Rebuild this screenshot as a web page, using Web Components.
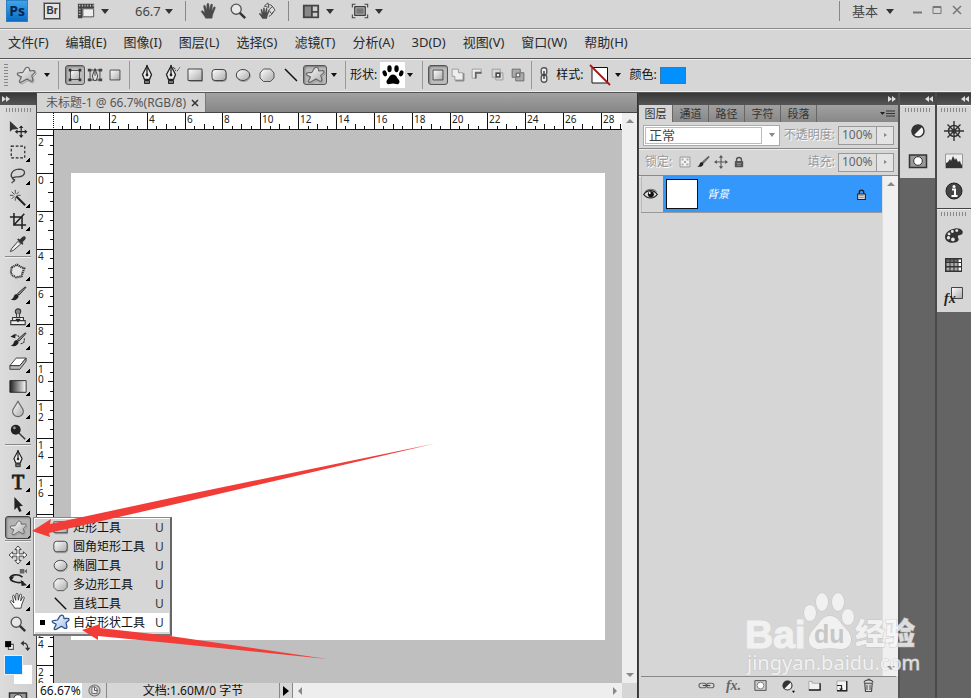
<!DOCTYPE html>
<html lang="zh-CN">
<head>
<meta charset="utf-8">
<title>未标题-1 @ 66.7%(RGB/8)</title>
<style>
html,body{margin:0;height:100%}
body{font-family:"Noto Sans","Noto Sans CJK SC",sans-serif;font-size:12px;line-height:16px;color:#111;background:#d6d6d6;overflow:hidden}
</style>
</head>
<body>
<ps-app></ps-app>
<script>
const RESET = `
*{box-sizing:border-box}
button,select,input{font:inherit;color:inherit;background:none;border:0;border-radius:0;padding:0;margin:0;appearance:none;outline:none}
button{display:flex;align-items:center;justify-content:center;flex:none}
.caret{width:0;height:0;border:3px solid transparent;border-top:4px solid #111;border-bottom:0}
`;
function define(name, css, html, setup) {
  const t = document.createElement('template');
  t.innerHTML = `<style>${RESET}${css}</style>${html}`;
  customElements.define(name, class extends HTMLElement {
    connectedCallback() {
      if (this.shadowRoot) return;
      this.attachShadow({ mode: 'open' }).append(t.content.cloneNode(true));
      if (setup) setup.call(this, this.shadowRoot);
    }
  });
}

/* ---------- icons ---------- */
const STAR = 'M10.500 2.500c2-.8 3 .5 3.200 3.300 1.800.3 4.600-1 5.300.5.700 1.900-2.200 2.700-3.200 4.200.2 2 2 4 .6 5.600-1.800 1-3.700-1.600-5.400-2-2 .4-5 4.100-7.400 3.200-1.500-1.200 1.900-3.700 1.800-5.500-1-1-4-.9-4.200-2.900.4-2 4-.8 5.600-1.500 1.300-1.300 1.700-4 3.700-4.900z';
const PEN = '<path d="M10 0v8" stroke="#222" stroke-width="1.200"/><path d="M10 1 5.500 9.500l2 5h5l2-5z" fill="#eee" stroke="#222" stroke-width="1.300"/><path d="M10 1v8" stroke="#222" stroke-width="1.300"/><circle cx="10" cy="10" r="1.400" fill="#222"/><path d="M7.500 15.500h5v3h-5z" fill="#777" stroke="#222"/>';
const HAND = 'M6.200 18c-.5-2-3.600-5-4.700-7.200-.3-1.300 1.300-1.500 2.200-.5l1.800 1.900L4 5c-.2-1.600 1.600-1.900 2-.5l1.500 4.800L7.700 2.600c.2-1.500 2-1.500 2.200 0l.4 6.500 1.600-6c.5-1.300 2.200-.9 2 .5l-1 6.300 2.300-4c.9-1.100 2.200-.2 1.700 1l-2.600 6.600c-.4 1.700-.6 3-1 4.500z';
const BRUSH = '<path d="M17.800 2.200 9.500 9.500l1.700 1.700 7.300-8c.5-1-.1-1.300-.7-1z" fill="#999" stroke="#222"/><path d="M9 10c-2.500 0-3 1-4 3.500-.6 1.500-1.600 2-3.200 2.500 3.500 2 8.400.7 9-4z" fill="#222"/>';
const HALF = '<circle cx="10" cy="10" r="6" fill="#f4f4f4" stroke="#333" stroke-width="1.500"/><path d="M14.500 5.500a6.300 6.300 0 0 0-9 9z" fill="#333"/>';
const LOCK = '<path d="M6.500 9V7a3.500 3.500 0 0 1 7 0v2" fill="none" stroke="currentColor" stroke-width="2"/><rect x="4" y="8.500" width="12" height="9" rx="1" fill="currentColor"/><path d="M7 12h6M7 14.500h6" stroke="#aaa"/>';
const ICONS = {
  star: `<path d="${STAR}" transform="translate(1 1.500)" fill="none" stroke="#999"/><path d="${STAR}" fill="url(#g)" stroke="#666" stroke-width="1.100"/>`,
  starblue: `<path d="${STAR}" fill="url(#b)" stroke="#2d4f86" stroke-width="1.300"/>`,
  shapelayer: '<path d="M5 5h10v10H5z" fill="url(#g)" stroke="#444"/><path d="M3 3h3v3H3zM14 3h3v3h-3zM3 14h3v3H3zM14 14h3v3h-3z" fill="#333"/>',
  paths: '<path d="M4.500 4.500h11v11h-11z" fill="none" stroke="#444"/><path d="M2 3h4v3H2zM14 3h4v3h-4zM2 14h4v3H2zM14 14h4v3h-4z" fill="#444"/><path d="m10 3-3 8 1.500 5h3l1.500-5z" fill="#ddd" stroke="#333"/><path d="M10 3v8" stroke="#333"/>',
  square: '<path d="M4.500 4.500h11v11h-11z" fill="url(#g)" stroke="#444"/>',
  rect: '<path d="M16.500 6.500h1v10h-13" fill="none" stroke="#999"/><path d="M3 4h14v11.500H3z" fill="url(#g)" stroke="#444"/>',
  rrect: '<rect x="3.500" y="5.500" width="14" height="11" rx="3" fill="none" stroke="#999"/><rect x="3" y="4.500" width="14" height="11" rx="3" fill="url(#g)" stroke="#444"/>',
  ellipse: '<ellipse cx="10.500" cy="11" rx="6.700" ry="5.500" fill="none" stroke="#999"/><ellipse cx="10" cy="10" rx="6.700" ry="5.500" fill="url(#g)" stroke="#444"/>',
  polygon: '<path d="M6.500 4h7L17 8v5l-3.500 3.500h-7L3 13V8z" fill="url(#g)" stroke="#555"/>',
  line: '<path d="m4 4 12 12" stroke="#111" stroke-width="1.500"/>',
  pen: PEN,
  freepen: PEN + '<path d="M12 3c3-2 1 4 4 3 2-1 1-3 4-4" fill="none" stroke="#222" stroke-dasharray="1 1"/>',
  hand: `<path d="${HAND}" fill="#4a4a4a" stroke="#4a4a4a" stroke-width=".5"/>`,
  handw: `<path d="${HAND}" fill="#fff" stroke="#333"/>`,
  zoom: '<circle cx="8" cy="8" r="5.600" fill="#e8e8e8" stroke="#555" stroke-width="1.500"/><path d="m12 12 6 6" stroke="#333" stroke-width="2.700"/>',
  rotate: `<g transform="translate(0 5) scale(.75)"><path d="${HAND}" fill="#4a4a4a"/></g><path d="M8 4c5-3 9 0 9.500 5-.6 4-3 6-5.500 7" fill="none" stroke="#444"/><path d="m11 1-4 3.500 5 1.500zM12 9l4-4 3 4-4 4z" fill="#ddd" stroke="#444"/>`,
  film: '<path d="M1 2h18v5H1z M1 2h5v16H1z" fill="#444"/><path d="M3 3v2M6 3v2M9 3v2M12 3v2M15 3v2M18 3v2M2 8h2M2 11h2M2 14h2" stroke="#ddd"/><path d="M6.500 7.500h12v9h-12z" fill="#eee" stroke="#444"/>',
  layout: '<path d="M1 3h18v15H1z" fill="#444"/><path d="M3 5h7v11H3z" fill="#888"/><path d="M12 5h5v5h-5zM12 12h5v4h-5z" fill="#ccc"/>',
  screen: '<path d="M1.500 6V2.500H5M15 2.500h3.500V6M18.500 14v3.500H15M5 17.500H1.500V14" fill="none" stroke="#444" stroke-width="1.200"/><path d="M4 5h12v10H4z" fill="#777" stroke="#333"/><path d="M5.500 6.500h9v7h-9z" fill="none" stroke="#aaa"/>',
  paw: '<g transform="translate(-1 -1) scale(1.100)"><path d="M10 9.500c3 0 3.500 3 5 4.500 2 2 .5 5-2 4.200-2-.7-4-.7-6 0-2.500.8-4-2.200-2-4.200 1.500-1.500 2-4.500 5-4.500z"/><ellipse cx="6.800" cy="4.300" rx="2" ry="3.100"/><ellipse cx="13.200" cy="4.300" rx="2" ry="3.100"/><ellipse cx="2.500" cy="8.500" rx="1.900" ry="2.800" transform="rotate(-20 2.500 8.500)"/><ellipse cx="17.500" cy="8.500" rx="1.900" ry="2.800" transform="rotate(20 17.500 8.500)"/></g>',
  add: '<path d="M3.500 3.500h7v4h5v8h-9v-4h-3z" fill="#eee" stroke="#999"/><path d="M7 16.500h9.500V8" fill="none" stroke="#666"/>',
  sub: '<path d="M3.500 3.500h10v4h-6v6h-4z" fill="#eee" stroke="#999"/><path d="M14 7.500H7.500V14" fill="none" stroke="#666" stroke-width="2"/>',
  inter: '<path d="M3.500 3.500h9v9h-9zM7.500 7.500h8v8h-8z" fill="none" stroke="#999"/><path d="M8 8h4v4H8z" fill="#eee" stroke="#444" stroke-width="1.500"/>',
  excl: '<path d="M3.500 3.500h9v4h4v9h-9v-4h-4z" fill="#aaa" stroke="#666"/><path d="M8 8h4v4H8z" fill="#eee" stroke="#444"/>',
  chain: '<rect x="6.500" y="1" width="7" height="9" rx="3" fill="#eee" stroke="#555" stroke-width="1.700"/><rect x="6.500" y="10" width="7" height="9" rx="3" fill="#eee" stroke="#555" stroke-width="1.700"/><path d="M10 5v10" stroke="#333" stroke-width="1.700"/>',
  chainh: '<rect x="0" y="7" width="10" height="6" rx="3" fill="none" stroke="#666" stroke-width="1.500"/><rect x="10" y="7" width="10" height="6" rx="3" fill="none" stroke="#666" stroke-width="1.500"/><path d="M5 10h10" stroke="#444" stroke-width="1.500"/>',
  nostyle: '<path d="M2 2.500h15.500v15.500H2z" fill="#fff" stroke="#111"/><path d="m0 0 20 20" stroke="#a01818" stroke-width="1.800"/>',
  move: '<path d="M1 1v12l3-2.500 6.500-.5z" fill="#333"/><path d="M13.500 7.500v11M8 13h11" stroke="#222" stroke-width="1.300"/><path d="m13.500 6 2.500 3h-5zM13.500 20l2.500-3h-5zM6.500 13l3-2.500v5zM20.500 13l-3-2.500v5z" fill="#222"/>',
  marquee: '<path d="M2.500 3.500h15v13h-15z" fill="none" stroke="#222" stroke-dasharray="3 2" stroke-width="1.300"/>',
  lasso: '<path d="M5 14c-5-3-2-10 6-10.500 9 0 8 8-1 8.500-3 .3-6 .3-6 2 .5 2 3 0 2 2s-2 1-3 3" fill="none" stroke="#444" stroke-width="1.500"/>',
  wand: '<path d="m8 8 10 10" stroke="#222" stroke-width="2.200"/><path d="M7 1v4M7 9v4M1 7h4M9 7h4M3 3l3 3M11 3 8 6M3 11l3-3" stroke="#444"/>',
  crop: '<path d="M5.500 1v13.500H19M1 5.500h13.500V19M5 15 17 2" fill="none" stroke="#222" stroke-width="1.700"/>',
  dropper: '<path d="m10 7-7 8-1.500 3.500L5 17l8-7z" fill="#eee" stroke="#333"/><path d="m9 5 6 6 1-2-1-1 3-3c2-3-1-5-3.500-2.500L12 5l-1.500-1z" fill="#333"/>',
  heal: '<path d="m3 6 6-3 3 2 5 2-2 5-1 4-6 1-4-2-2-3z" fill="#e4e4e4" stroke="#333" stroke-width="2.400" stroke-dasharray="1.400 .8"/>',
  brush: BRUSH,
  stamp: '<circle cx="10" cy="4" r="3" fill="#888" stroke="#333" stroke-width="1.200"/><path d="M8.500 6.500v4h3v-4M4 10.500h12v3.500H4zM2 14h16v4.500H2z" fill="#eee" stroke="#333" stroke-width="1.200"/><path d="M7 12h6l-3 4z" fill="#222"/>',
  history: BRUSH + '<path d="M4 6c3-3 7-1 7 1M13 14c4 0 5-4 3.500-6" fill="none" stroke="#333" stroke-width="1.300" stroke-dasharray="2 1"/><path d="M1.500 6.500 7 3v5z" fill="#222"/>',
  eraser: '<path d="m1 13 7-8.500h11l-7 8.500z" fill="#fff" stroke="#333"/><path d="M1 13v4h11l7-9V4.500L12 13z" fill="#bbb" stroke="#333"/>',
  gradient: '<path d="M1 4h18v13H1z" fill="url(#h)" stroke="#222"/>',
  drop: '<path d="M10 1c1 4 6 7.500 6 11.500a6 6 0 0 1-12 0C4 8.500 9 5 10 1z" fill="url(#g)" stroke="#666" stroke-width="1.200"/>',
  dodge: '<circle cx="7.500" cy="7.500" r="5.500" fill="#222"/><circle cx="6" cy="5.500" r="1.500" fill="#999"/><path d="m11 11 7 7" stroke="#333" stroke-width="1.500"/>',
  arrow: '<path d="m6 1 9.500 10-4 .3 2.500 5.500-2.600 1-2.400-5.300L6 15.500z" fill="#222"/>',
  move3d: '<path d="m10 0 3.500 4h-2.300v4.800H16V6.500l4 3.500-4 3.500v-2.300h-4.800V16h2.300L10 20l-3.500-4h2.300v-4.800H4v2.300L0 10l4-3.500v2.300h4.800V4H6.500z" fill="#fff" stroke="#333"/>',
  orbit: '<path d="M15 9C10 5 2 6 1.500 10S12 16.500 16 14" fill="none" stroke="#222" stroke-width="1.800"/><path d="m20 18-7-6 1 7zM0 9l6-1-3.500 5z" fill="#222"/><path d="M12 0h5v5h-5zM17 2.500l3-2.500v5z" fill="#666"/>',
  defcol: '<path d="M8 8h9v9H8z" fill="#fff" stroke="#555" stroke-width="2"/><path d="M2 2h11v11H2z"/>',
  swap: '<path d="M5 6c7-1 9 3 9 9" fill="none" stroke="#333" stroke-width="2.200"/><path d="M1 6l6-5v10zM14 20l-5-6h10z" fill="#333"/>',
  mask: '<path d="M1.500 4h17v12.500h-17z" fill="#999" stroke="#333" stroke-width="1.500"/><circle cx="10" cy="10" r="4.300" fill="#fff" stroke="#333"/>',
  masklite: '<path d="M2.500 3.500h15v13h-15z" fill="#ccc" stroke="#555" stroke-width="1.300"/><circle cx="10" cy="10" r="4.500" fill="#fff" stroke="#666"/>',
  half: HALF,
  halfm: HALF + '<path d="M16 17h4l-2 3z"/>',
  wheel: '<circle cx="10" cy="10" r="5.500" fill="none" stroke="#333" stroke-width="1.500"/><circle cx="10" cy="10" r="2.500" fill="#333"/><path d="M10 0v20M0 10h20M3.500 3.500l13 13M16.500 3.500l-13 13" stroke="#333" stroke-width="1.400"/>',
  histo: '<path d="M1.500 3h17v14h-17z" fill="#eee" stroke="#999"/><path d="M2 17v-5l2-1 2-3 1 2 2-5 2 4 1-2 2 4 2-1 1 3 1 1v3z" fill="#333"/>',
  info: '<circle cx="10" cy="10" r="8" fill="#444" stroke="#222"/><path d="M8 8.500h3v6.500M7.500 15h6" fill="none" stroke="#fff" stroke-width="2"/><circle cx="10" cy="5.500" r="1.500" fill="#fff"/>',
  palette: '<g transform="translate(-1 -1) scale(1.100)"><path d="M3 15c-3-4 0-10 8-11 6-.5 8 3 6.500 5-1.500 1.500-4 .5-4 2.500 0 1.500 1.500 2 .5 3.500-2 2.500-8 3-11 0z" fill="#333"/><g fill="#e6e6e6"><circle cx="5" cy="12.500" r="1.500"/><circle cx="5.500" cy="9" r="1.300"/><circle cx="8.500" cy="6.800" r="1.300"/><circle cx="12.500" cy="6" r="1.300"/><circle cx="9" cy="14" r="1.700"/></g></g>',
  swatches: '<path d="M1 3h17v14H1z" fill="#333"/><path d="M2.500 8h3v3h-3zM6.500 8h3v3h-3zM10.500 8h3v3h-3zM2.500 12.500h3v3h-3zM6.500 12.500h3v3h-3zM10.500 12.500h3v3h-3z" fill="#aaa"/><path d="M14.500 4.500H17v2.500h-2.500zM14.500 8H17v3h-2.500zM14.500 12.500H17v3h-2.500z" fill="#fff"/><path d="M2.500 4.500h3V7h-3zM6.500 4.500h3V7h-3zM10.500 4.500h3V7h-3z" fill="#666"/>',
  checker: '<path d="M3 3h14v14H3z" fill="#f4f4f4" stroke="#777"/><path d="M5 5h3v3H5zM12 5h3v3h-3zM8.500 8.500h3v3h-3zM5 12h3v3H5zM12 12h3v3h-3z" fill="#aaa"/>',
  cross: '<path d="M10 3v14M3 10h14" stroke="#555" stroke-width="1.500"/><path d="m10 0 3 4H7zM10 20l3-4H7zM0 10l4-3v6zM20 10l-4-3v6z" fill="#555"/>',
  lock: LOCK,
  lockw: '<path d="M6 9V6a4 4 0 0 1 8 0v3" fill="none" stroke="#222" stroke-width="2.500"/><path d="M3 9h14v10H3z" fill="#ddd" stroke="#222" stroke-width="2"/><path d="M6 12h8M6 15.500h8" stroke="#555"/>',
  eye: '<path d="M1 10c4-7 14-7 18 0-4 6-14 6-18 0z" fill="#ddd" stroke="#222" stroke-width="1.700"/><circle cx="10.500" cy="9.500" r="4" fill="#111"/><circle cx="9" cy="8" r="1.300" fill="#fff"/><path d="M2 7c4-5 12-5 16-1" fill="none" stroke="#444"/>',
  folder: '<path d="M2.500 7V4.500H7V7h10.500v9h-15z" fill="#f2f2f2" stroke="#999"/><path d="M17.500 7v9h-15" fill="none" stroke="#222" stroke-width="1.800"/>',
  newl: '<path d="M4 4h13v13H4z" fill="#f4f4f4" stroke="#999"/><path d="M17 4v13H4" fill="none" stroke="#222" stroke-width="1.800"/><path d="M4 10h6v7" fill="none" stroke="#222" stroke-width="1.600"/><path d="m7 14 5 0-2.500 3z" fill="#222"/>',
  trash: '<path d="M5 7h10l-1 11H6zM4 6c1-4 11-5 12 0" fill="#ddd" stroke="#444" stroke-width="1.500"/><path d="M8 9v7M12 9v7M8 3c1-2 4-2 5 0" fill="none" stroke="#444" stroke-width="1.300"/>',
  clock: '<circle cx="10" cy="10" r="8.500" fill="#ccc" stroke="#777" stroke-width="1.800"/><path d="M6 4.500h5l3 3v7H6z" fill="#eee" stroke="#666" stroke-width="1.500"/><path d="M10 5v5h5" fill="none" stroke="#555" stroke-width="1.500"/>',
  styles: '<path d="M7.500 2.500h11v11h-11z" fill="url(#g)" stroke="#444"/>'
};
const DEFS = '<defs><linearGradient id="g" x1="0" y1="0" x2="1" y2="1"><stop stop-color="#fff"/><stop offset="1" stop-color="#aaa"/></linearGradient><linearGradient id="b" x1="0" y1="0" x2="1" y2="1"><stop stop-color="#fff"/><stop offset="1" stop-color="#9dbbe6"/></linearGradient><linearGradient id="h"><stop stop-color="#222"/><stop offset="1" stop-color="#fff"/></linearGradient></defs>';
define('ps-icon', ':host{display:block;width:20px;height:20px;flex:none}svg{display:block;width:100%;height:100%;overflow:visible}', '<svg viewBox="0 0 20 20" aria-hidden="true"></svg>', function (r) {
  r.querySelector('svg').innerHTML = DEFS + ICONS[this.getAttribute('name')];
});
const ic = n => `<ps-icon name="${n}"></ps-icon>`;

/* ---------- application bar ---------- */
define('ps-appbar', `
:host{display:flex;align-items:center;height:28px;padding:0 4px 6px 6px;color:#444;font-size:13px}
.ps{width:22px;height:22px;font:bold 14px/18px "Open Sans",sans-serif;background:linear-gradient(#3fa4ea,#0b6cc4);color:#06264d;border:1px solid #2b7fc4;margin-right:16px}
.br{width:16px;height:16px;font:bold 10px/14px "Liberation Sans",sans-serif;border:1px solid #444;outline:1px solid #999;background:#e4e4e4;color:#333;margin-right:17px}
ps-icon{width:18px;height:18px}
.caret{border-width:4px;border-top-width:5px;border-bottom:0;border-top-color:#333}
.sep{width:1px;height:20px;background:#888}
.m{gap:6px}
select{width:26px}
.z{display:flex;align-items:center;gap:4px;margin:0 12px 0 26px}
.t{width:29px}
.w{width:20px;color:#777}
.w svg{width:14px;height:14px}
.sp{flex:1}
`, `
<button class="ps" aria-label="Photoshop">Ps</button><button class="br" aria-label="Bridge">Br</button>
<button class="m">${ic('film')}<i class="caret"></i></button>
<label class="z"><select aria-label="缩放级别"><option>66.7</option></select><i class="caret"></i></label>
<span class="sep"></span>
<button class="t" style="margin-left:8px">${ic('hand')}</button><button class="t">${ic('zoom')}</button><button class="t">${ic('rotate')}</button>
<span class="sep" style="margin:0 13px 0 7px"></span>
<button class="m">${ic('layout')}<i class="caret"></i></button>
<button class="m" style="margin-left:17px">${ic('screen')}<i class="caret"></i></button>
<span class="sp"></span><span class="sep"></span>
<label class="z" style="margin:0 13px 0 12px;gap:8px"><select aria-label="工作区"><option>基本</option></select><i class="caret"></i></label>
<button class="w" aria-label="最小化"><svg viewBox="0 0 14 14"><path d="M3 8.500h9" stroke="currentColor" stroke-width="2"/></svg></button>
<button class="w" aria-label="最大化"><svg viewBox="0 0 14 14"><path d="M3 2.500h8v7H3z" fill="none" stroke="currentColor"/><path d="M3 3h8" stroke="currentColor" stroke-width="2"/></svg></button>
<button class="w" aria-label="关闭"><svg viewBox="0 0 14 14"><path d="m3 2 8 8m0-8-8 8" stroke="currentColor" stroke-width="1.500"/></svg></button>`);

define('ps-menubar', `
:host{display:flex;align-items:center;gap:17px;height:31px;padding:0 8px 3px;border-top:1px solid #8a8a8a;border-bottom:1px solid #555;box-shadow:inset 0 1px #eee;font-size:13px;line-height:18px}
button{color:#2a2a2a}`,
['文件(F)', '编辑(E)', '图像(I)', '图层(L)', '选择(S)', '滤镜(T)', '分析(A)', '3D(D)', '视图(V)', '窗口(W)', '帮助(H)'].map(t => `<button>${t}</button>`).join(''));

/* ---------- options bar ---------- */
define('ps-options', `
:host{display:flex;align-items:center;height:33px;box-shadow:inset 0 1px #eee;border-bottom:1px solid #eee}
.g{display:flex;align-items:center;height:28px;border-right:1px solid #999;flex:none}
.g:last-child{border:0}
.grip{width:4px;height:24px;margin:0 2px 0 4px;background:radial-gradient(circle,#888 1px,transparent 1px) 0 0/2px 3px}
button{height:22px}
.b24{width:24px}.b20{width:20px}
.on{border:1px solid #555;border-radius:3px;background:#bbb;box-shadow:inset 1px 1px 2px #777;height:20px}
.b24 ps-icon{width:20px;height:20px}.b20 ps-icon{width:18px;height:18px}
.c{width:10px}
.paw{width:25px;height:26px;background:#fff;margin-left:3px}
.color{width:26px;height:17px;background:#0090ff;border:1px solid #3b7ba8;margin-left:3px}
`, `
<div class="g" style="padding-right:6px"><span class="grip"></span><button style="width:32px">${ic('star')}</button><button class="c"><i class="caret"></i></button></div>
<div class="g" style="padding:0 4px 0 6px"><button class="b20 on">${ic('shapelayer')}</button><button class="b20">${ic('paths')}</button><button class="b20">${ic('square')}</button></div>
<div class="g" style="padding:0 4px 0 5px">${['pen', 'freepen', 'rect', 'rrect', 'ellipse', 'polygon', 'line'].map(n => `<button class="b24">${ic(n)}</button>`).join('')}<button class="b24 on">${ic('star')}</button><button style="width:14px"><i class="caret"></i></button></div>
<div class="g" style="padding:0 7px 0 4px"><label for="shape">形状:</label><button class="paw" id="shape">${ic('paw')}</button><button class="c"><i class="caret"></i></button></div>
<div class="g" style="padding:0 3px 0 5px"><button class="b20 on">${ic('square')}</button>${['add', 'sub', 'inter', 'excl'].map(n => `<button class="b20">${ic(n)}</button>`).join('')}</div>
<div class="g" style="padding-left:4px"><button style="width:16px;margin-right:4px"><ps-icon name="chain" style="width:16px;height:16px"></ps-icon></button><label for="style">样式:</label><button id="style" style="margin-left:7px">${ic('nostyle')}</button><button style="width:16px"><i class="caret"></i></button><label for="color" style="margin-left:3px">颜色:</label><button id="color" class="color"></button></div>`);

/* ---------- toolbox ---------- */
const TOOLS = [['move', 'marquee', 'lasso', 'wand', 'crop', 'dropper'], ['heal', 'brush', 'stamp', 'history', 'eraser', 'gradient', 'drop', 'dodge'], ['pen', 'T', 'arrow', 'star'], ['move3d', 'orbit', 'handw', 'zoom']];
define('ps-toolbox', `
:host{display:flex;flex-direction:column;width:37px;flex:none;background:linear-gradient(90deg,#dcdcdc,#cfcfcf);border-right:1px solid #444;overflow:hidden}
.h{height:12px;flex:none;background:linear-gradient(#383838,#555);padding-left:2px;justify-content:flex-start}
.h svg{width:8px;height:6px}
.grip{height:4px;margin:3px 5px 5px;flex:none;background:radial-gradient(circle,#888 1px,transparent 1px) 0 0/3px 2px}
.s{display:flex;flex-direction:column;align-items:center;margin:0 5px}
.s+.s{border-top:1px solid #888;box-shadow:inset 0 1px #eee;padding-top:2px;margin-top:1px}
.s button{width:26px;height:23px}
.s button ps-icon{width:18px;height:18px}
.f{background:linear-gradient(135deg,transparent 50%,#000 50%) 21px 18px/4px 4px no-repeat}
.s .on{border:1px solid #444;border-radius:3px;background-color:#b4b4b4;box-shadow:inset 1px 1px 2px #777}
.T{font:20px/22px "Liberation Serif",serif;-webkit-text-stroke:1px #222}
.mini{display:flex;justify-content:space-between;padding:0 5px 0 4px;margin-top:5px}
.mini ps-icon{width:11px;height:11px}
.sw{display:grid;grid-template:10px 10px 9px/10px 9px 9px;margin:4px 4px 0;flex:none}
.fg{grid-area:1/1/3/3;background:#0090ff;border:1px solid #eee;z-index:1}
.bg{grid-area:2/2/4/4;background:#fff}
.q{margin-top:5px}
`, `<button class="h" aria-label="展开"><svg viewBox="0 0 8 6"><path d="m0 0 4 3-4 3zM4 0l4 3-4 3z" fill="#ddd"/></svg></button><div class="grip"></div>
${TOOLS.map(s => `<div class="s">${s.map(n => `<button class="${['move', 'zoom'].includes(n) ? '' : 'f'} ${n === 'star' ? 'on' : ''} ${n === 'T' ? 'T' : ''}">${n === 'T' ? 'T' : ic(n)}</button>`).join('')}</div>`).join('')}
<div class="mini"><button>${ic('defcol')}</button><button>${ic('swap')}</button></div>
<div class="sw"><button class="fg" aria-label="前景色"></button><button class="bg" aria-label="背景色"></button></div>
<button class="q">${ic('mask')}</button>`);

define('ps-flyout', `
:host{display:block;position:absolute;left:33px;top:517px;width:139px;background:#d6d6d6;border:1px solid #888;border-right:2px solid #666;border-bottom:2px solid #777;box-shadow:inset 1px 1px #fff;padding:0 1px 2px}
button{width:100%;height:19px;justify-content:flex-start;padding-left:5px}
i{width:5px;height:5px;margin-right:6px}
.on{background:#fff}.on i{background:#000}
ps-icon{width:19px;height:19px;margin-right:3px}
span{flex:1;text-align:left}kbd{font:inherit;width:14px;text-align:left;color:#333}
`, [['rect', '矩形工具'], ['rrect', '圆角矩形工具'], ['ellipse', '椭圆工具'], ['polygon', '多边形工具'], ['line', '直线工具'], ['starblue', '自定形状工具']].map(([n, t]) => `<button class="${n === 'starblue' ? 'on' : ''}"><i></i>${ic(n)}<span>${t}</span><kbd>U</kbd></button>`).join(''));

/* ---------- document window ---------- */
define('ps-ruler', `
:host{display:block;overflow:hidden;background:#fff;min-width:0;min-height:0;contain:size}
svg{display:block}text{font:10px "Noto Sans",sans-serif;fill:#222}path{stroke:#111;shape-rendering:crispEdges;fill:none}`, '<svg></svg>', function (r) {
  const v = this.hasAttribute('vertical'), origin = v ? 43 : 17, step = 530 / 56, svg = r.querySelector('svg');
  const draw = () => {
    const len = v ? this.clientHeight : this.clientWidth;
    svg.setAttribute('width', v ? 17 : len);
    svg.setAttribute('height', v ? len : 17);
    let d = v ? `M16.500 0V${len}` : `M0 16.500H${len}`, texts = '';
    for (let k = -4; ; k++) {
      const p = Math.round(origin + k * step) + 0.5;
      if (p < 0) continue;
      if (p > len) break;
      const a = k % 4 === 0 ? 0 : k % 2 === 0 ? 11 : 13;
      d += v ? `M${a} ${p}H17` : `M${p} ${a}V17`;
      if (k % 4 === 0) {
        const n = String(Math.abs(k / 2));
        texts += v ? [...n].map((c, j) => `<text x="1" y="${Math.floor(p) + 11 + j * 10}">${c}</text>`).join('') : `<text x="${Math.floor(p) + 2}" y="10">${n}</text>`;
      }
    }
    svg.innerHTML = `<path d="${d}"/>${texts}`;
  };
  new ResizeObserver(draw).observe(this);
});
define('ps-document', `
:host{display:grid;flex:1;min-width:0;grid-template:20px 17px 1fr 15px/17px 1fr 15px;background:#bfbfbf;border-right:1px solid #333}
.tabs{grid-column:1/-1;background:linear-gradient(#a2a2a2,#868686);border-bottom:1px solid #444;display:flex}
.tab{display:flex;align-items:center;background:#d4d4d4;border-right:1px solid #777;padding:0 5px 0 9px;color:#555;gap:4px;white-space:nowrap}
.x{width:10px}.x svg{width:8px;height:8px}
.corner{background:#fff linear-gradient(#111,#111) 0 16px/17px 1px no-repeat;border-right:1px dotted #111}
.v{grid-area:2/3/4/4;background:#eee;display:flex;flex-direction:column;justify-content:space-between;align-items:center;padding:6px 0}
.up,.dn,.lt,.rt{width:0;height:0;border:4px solid transparent}
.up{border-bottom-color:#888;border-top:0}.dn{border-top-color:#888;border-bottom:0}
.lt{border-right-color:#888;border-left:0}.rt{border-left-color:#888;border-right:0}
.stage{padding:43px 17px;display:flex;min-width:0}
.stage div{flex:1;background:#fff}
.st{grid-column:1/-1;display:flex;background:#d6d6d6}
input{width:45px;background:#fff;padding-left:3px;height:15px}
.clk{width:25px;border-right:1px solid #888}.clk ps-icon{width:13px;height:13px}
.info{width:172px;text-align:center}
.go{width:14px;border:solid #888;border-width:0 1px}.go i{width:0;height:0;border:5px solid transparent;border-left:6px solid #000;border-right:0}
.hs{flex:1;background:#eee;display:flex;justify-content:space-between;align-items:center;padding:0 5px}
.end{width:15px}
`, `<div class="tabs"><div class="tab"><span>未标题-1 @ 66.7%(RGB/8)</span><button class="x" aria-label="关闭"><svg viewBox="0 0 8 8"><path d="m1 1 6 6m0-6L1 7" stroke="#333" stroke-width="1.500"/></svg></button></div></div>
<div class="corner"></div><ps-ruler></ps-ruler>
<div class="v"><i class="up"></i><i class="dn"></i></div>
<ps-ruler vertical></ps-ruler><div class="stage"><div></div></div>
<div class="st"><input aria-label="缩放" value="66.67%"><button class="clk">${ic('clock')}</button><span class="info">文档:1.60M/0 字节</span><button class="go" aria-label="更多"><i></i></button><div class="hs"><i class="lt"></i><i class="rt"></i></div><span class="end"></span></div>`);

/* ---------- layers panel ---------- */
const dbl = left => `<svg viewBox="0 0 8 6" style="width:8px;height:6px"><path d="${left ? 'M4 0 0 3l4 3zM8 0 4 3l4 3z' : 'm0 0 4 3-4 3zM4 0l4 3-4 3z'}" fill="#ddd"/></svg>`;
define('ps-layers', `
:host{display:flex;flex-direction:column;width:262px;flex:none;background:#d6d6d6;border-right:2px solid #555;border-left:1px solid #444}
.h{height:12px;background:linear-gradient(#383838,#555);justify-content:flex-end;padding-right:2px}
.tabs{display:flex;height:17px;background:linear-gradient(#a0a0a0,#888);font-size:11px;flex:none}
.tabs button{width:36px;border-right:1px solid #666;color:#333}
.tabs .on{background:#d6d6d6;width:34px}
.tabs .menu{margin-left:auto;border:0;width:20px}
.row{display:flex;align-items:center;height:27px;padding:0 4px;border-bottom:1px solid #888;box-shadow:0 1px #eee;flex:none}
.row label{color:#999;text-shadow:1px 1px #fff}
.sel{display:flex;flex:1;height:21px;border:1px solid #aaa;background:#fff;align-items:center;margin-right:4px}
.sel select{flex:1;height:17px;border:1px solid #bbb;margin-left:1px;padding-left:3px;font-size:13px;line-height:15px;color:#444}
.sel i{border-top-color:#888;margin:0 4px 0 7px}
.num{display:flex;width:56px;height:19px;border:1px solid #999;margin-left:3px;background:#ddd;flex:none}
.num input{width:37px;padding-left:3px;color:#666}
.num button{flex:1;border-left:1px solid #999;background:#e4e4e4}
.num i{width:0;height:0;border:2px solid transparent;border-left:3px solid #888;border-right:0}
.lk{width:18px;height:20px;color:#555}.lk ps-icon{width:14px;height:14px}
.main{display:flex;flex:1;min-height:0}
.list{flex:1;padding-left:2px}
.layer{display:flex;height:37px;align-items:center;background:#3497fb;border-bottom:1px solid #999;color:#fff}
.eye{width:22px;height:36px;background:#d6d6d6;border:1px solid #bbb;border-width:0 4px 0 1px;border-right-color:#d6d6d6}.eye ps-icon{width:15px;height:15px}
.th{width:32px;height:30px;border:1px solid #111;background:#fff;margin:0 9px 0 3px}
.layer em{flex:1;font-size:11px}
.layer>ps-icon{width:11px;height:11px;margin-right:15px}
.sb{width:16px;background:#f0f0f0;display:flex;flex-direction:column;justify-content:space-between;align-items:center;padding:6px 0;border-left:1px solid #ddd}
.up,.dn{width:0;height:0;border:4px solid transparent}.up{border-bottom-color:#888;border-top:0}.dn{border-top-color:#888;border-bottom:0}
.ft{display:flex;height:22px;border-top:1px solid #888;padding:0 15px 4px 52px;margin:0 2px;flex:none;align-items:center}
.ft button{width:27px;height:16px}.ft ps-icon{width:15px;height:15px}
.fx{font:italic bold 14px/14px "Liberation Serif",serif;color:#666}
`, `<button class="h" aria-label="折叠">${dbl(0)}</button>
<div class="tabs"><button class="on">图层</button><button>通道</button><button>路径</button><button>字符</button><button>段落</button><button class="menu" aria-label="面板菜单"><svg viewBox="0 0 16 10" style="width:16px;height:10px"><path d="M0 3h5L2.500 6z" fill="#222"/><path d="M6 2h9M6 4.500h9M6 7h9" stroke="#333"/></svg></button></div>
<div class="row"><div class="sel"><select aria-label="混合模式"><option>正常</option></select><i class="caret"></i></div><label for="op">不透明度:</label><div class="num"><input id="op" value="100%"><button aria-label="调整不透明度"><i></i></button></div></div>
<div class="row"><label style="margin:0 4px 0 2px">锁定:</label>${['checker', 'brush', 'cross', 'lock'].map(n => `<button class="lk">${ic(n)}</button>`).join('')}<span style="flex:1"></span><label for="fl">填充:</label><div class="num"><input id="fl" value="100%"><button aria-label="调整填充"><i></i></button></div></div>
<div class="main"><div class="list"><div class="layer"><button class="eye" aria-label="可见性">${ic('eye')}</button><span class="th"></span><em>背景</em>${ic('lockw')}</div></div><div class="sb"><i class="up"></i><i class="dn"></i></div></div>
<div class="ft"><button>${ic('chainh')}</button><button class="fx">fx.</button>${['masklite', 'halfm', 'folder', 'newl', 'trash'].map(n => `<button>${ic(n)}</button>`).join('')}</div>`);

define('ps-dock', `
:host{display:flex;flex-direction:column;width:37px;flex:none;background:#646464;border-right:2px solid #4a4a4a}
:host(:last-child){width:34px;border:0}
.h{height:12px;background:linear-gradient(#383838,#555);justify-content:flex-end;padding-right:2px}
.g{background:#d6d6d6;display:flex;flex-direction:column;align-items:center;padding:3px 0 2px;box-shadow:inset 0 1px #eee}
.g+.g{border-top:1px solid #444}
.grip{width:28px;height:4px;margin-bottom:4px;background:radial-gradient(circle,#888 1px,transparent 1px) 0 0/3px 2px}
.g button{width:30px;height:30px}
.fx{display:grid}
.fx>*{grid-area:1/1}
.fx span{font:italic bold 14px/12px "Liberation Serif",serif;align-self:end;justify-self:start;z-index:1;color:#222}
`, `<button class="h" aria-label="展开">${dbl(1)}</button>`, function (r) {
  for (const group of this.getAttribute('icons').split('|')) {
    const g = document.createElement('div');
    g.className = 'g';
    g.innerHTML = '<div class="grip"></div>' + group.split(' ').map(n => `<button>${n === 'styles' ? `<div class="fx">${ic(n)}<span>fx</span></div>` : ic(n)}</button>`).join('');
    r.append(g);
  }
});

/* ---------- overlays ---------- */
define('ps-pointers', ':host{position:absolute;left:0;top:0;pointer-events:none}svg{display:block;overflow:visible}', `
<svg width="440" height="670" fill="#f23c38"><path d="M32 531 51 519 50 524 180 496 435 443.500 180 503 49 533 50 537z"/><path d="M82 630 100 624 100 628 170 636 327 659 170 643 98 636 98 640z"/></svg>`);
define('ps-watermark', `
:host{position:absolute;right:50px;bottom:20px;width:176px;height:84px;pointer-events:none;opacity:.82}
svg{display:block;overflow:visible}
text,.p{fill:#f8f8f8;stroke:#c4c4c4;stroke-width:1;paint-order:stroke}
.b{font:bold 39px "Liberation Sans",sans-serif;stroke:#f8f8f8}.c{font:900 30px "Noto Sans CJK SC",sans-serif}.u{font:20px "Noto Sans",sans-serif}
.d{font:bold 25px "Liberation Sans",sans-serif;fill:#c4c4c4;stroke:none}`, `
<svg width="176" height="84"><text class="b" x="0" y="54">Bai</text>
<g class="p"><ellipse cx="65" cy="19" rx="6" ry="8"/><ellipse cx="77" cy="8" rx="6" ry="9"/><ellipse cx="93" cy="8" rx="6" ry="9"/><ellipse cx="103" cy="23" rx="6" ry="8"/><path d="M85 22c8 0 10 7 16 13 10 10 4 21-6 20-7-1-13-1-20 0-10 1-16-10-6-20 6-6 8-13 16-13z"/></g>
<text class="d" x="69" y="49">du</text><text class="c" x="110" y="50">经验</text><text class="u" x="2" y="76">jingyan.baidu.com</text></svg>`);

define('ps-app', `
:host{display:flex;flex-direction:column;height:100vh;position:relative;background:#d6d6d6;overflow:hidden}
.w{display:flex;flex:1;min-height:0;border-top:1px solid #555}
`, `<ps-appbar></ps-appbar><ps-menubar></ps-menubar><ps-options></ps-options>
<div class="w"><ps-toolbox></ps-toolbox><ps-document></ps-document><ps-layers></ps-layers><ps-dock icons="half mask"></ps-dock><ps-dock icons="wheel histo info|palette swatches styles"></ps-dock></div>
<ps-flyout></ps-flyout><ps-pointers></ps-pointers><ps-watermark></ps-watermark>`);
</script>
</body>
</html>
